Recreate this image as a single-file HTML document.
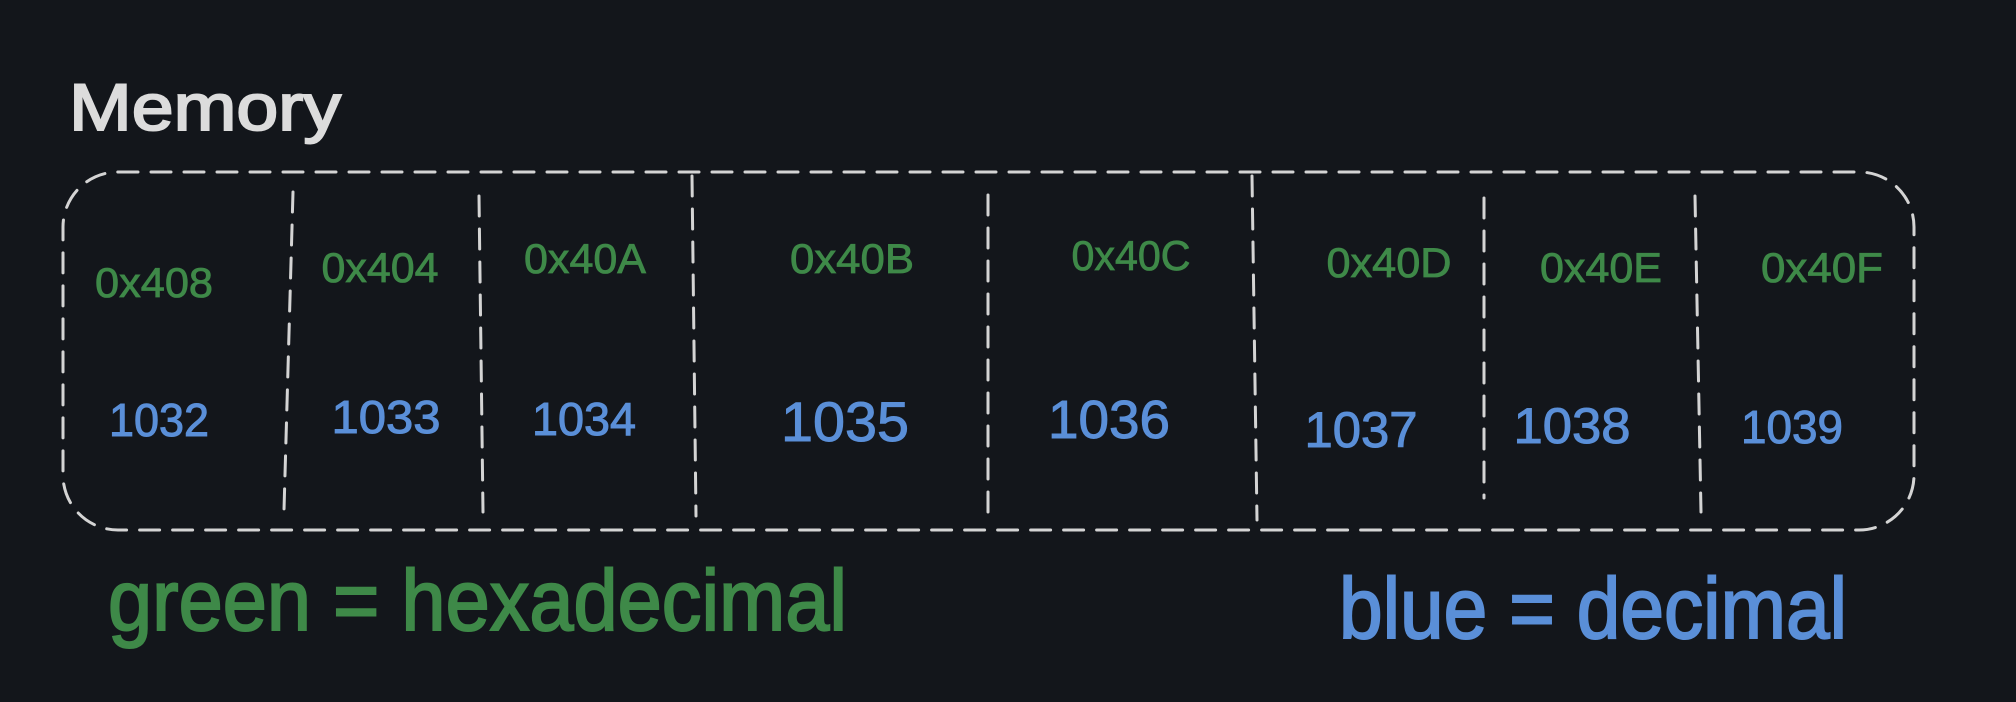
<!DOCTYPE html>
<html><head><meta charset="utf-8"><style>
html,body{margin:0;padding:0;background:#13161b;}
svg{display:block}
text{font-family:"Liberation Sans",sans-serif;}
</style></head><body>
<svg width="2016" height="702" viewBox="0 0 2016 702" xmlns="http://www.w3.org/2000/svg">
<rect width="2016" height="702" fill="#13161b"/>
<text x="69" y="130" font-size="66" fill="#dcdcdc" stroke="#dcdcdc" stroke-width="2" textLength="272" lengthAdjust="spacingAndGlyphs">Memory</text>
<g fill="none" stroke="#d4d4d4" stroke-width="3" stroke-dasharray="20 13" stroke-linecap="round">
<rect x="63" y="172" width="1851" height="358" rx="55" ry="55"/>
<line x1="293" y1="192" x2="284" y2="510"/>
<line x1="479" y1="196" x2="483" y2="512"/>
<line x1="692" y1="176" x2="696" y2="516"/>
<line x1="988" y1="195" x2="988" y2="512"/>
<line x1="1252" y1="176" x2="1257" y2="520"/>
<line x1="1484" y1="198" x2="1484" y2="498"/>
<line x1="1695" y1="196" x2="1701" y2="512"/>
</g>
<g fill="#3e8948" stroke="#3e8948" stroke-width="0.8" font-size="42" text-anchor="middle">
<text x="154" y="297" textLength="118" lengthAdjust="spacingAndGlyphs">0x408</text>
<text x="380" y="282" textLength="117" lengthAdjust="spacingAndGlyphs">0x404</text>
<text x="585" y="273" textLength="122" lengthAdjust="spacingAndGlyphs">0x40A</text>
<text x="852" y="273" textLength="124" lengthAdjust="spacingAndGlyphs">0x40B</text>
<text x="1131" y="270" textLength="119" lengthAdjust="spacingAndGlyphs">0x40C</text>
<text x="1389" y="277" textLength="125" lengthAdjust="spacingAndGlyphs">0x40D</text>
<text x="1601" y="282" textLength="122" lengthAdjust="spacingAndGlyphs">0x40E</text>
<text x="1822" y="282" textLength="122" lengthAdjust="spacingAndGlyphs">0x40F</text>
</g>
<g fill="#5a8fd8" stroke="#5a8fd8" stroke-width="1" font-size="46" text-anchor="middle">
<text x="159" y="436" textLength="100" lengthAdjust="spacingAndGlyphs">1032</text>
<text x="386" y="433" textLength="109" lengthAdjust="spacingAndGlyphs">1033</text>
<text x="584" y="435" textLength="104" lengthAdjust="spacingAndGlyphs">1034</text>
<text x="845" y="441" font-size="56" textLength="128" lengthAdjust="spacingAndGlyphs">1035</text>
<text x="1109" y="438" font-size="54" textLength="122" lengthAdjust="spacingAndGlyphs">1036</text>
<text x="1361" y="447" font-size="50" textLength="113" lengthAdjust="spacingAndGlyphs">1037</text>
<text x="1572" y="443" font-size="50" textLength="117" lengthAdjust="spacingAndGlyphs">1038</text>
<text x="1792" y="443" textLength="102" lengthAdjust="spacingAndGlyphs">1039</text>
</g>
<text x="108" y="630" font-size="86" fill="#3e8948" stroke="#3e8948" stroke-width="2" textLength="739" lengthAdjust="spacingAndGlyphs">green = hexadecimal</text>
<text x="1339" y="638" font-size="86" fill="#5a8fd8" stroke="#5a8fd8" stroke-width="2" textLength="508" lengthAdjust="spacingAndGlyphs">blue = decimal</text>
</svg>
</body></html>
